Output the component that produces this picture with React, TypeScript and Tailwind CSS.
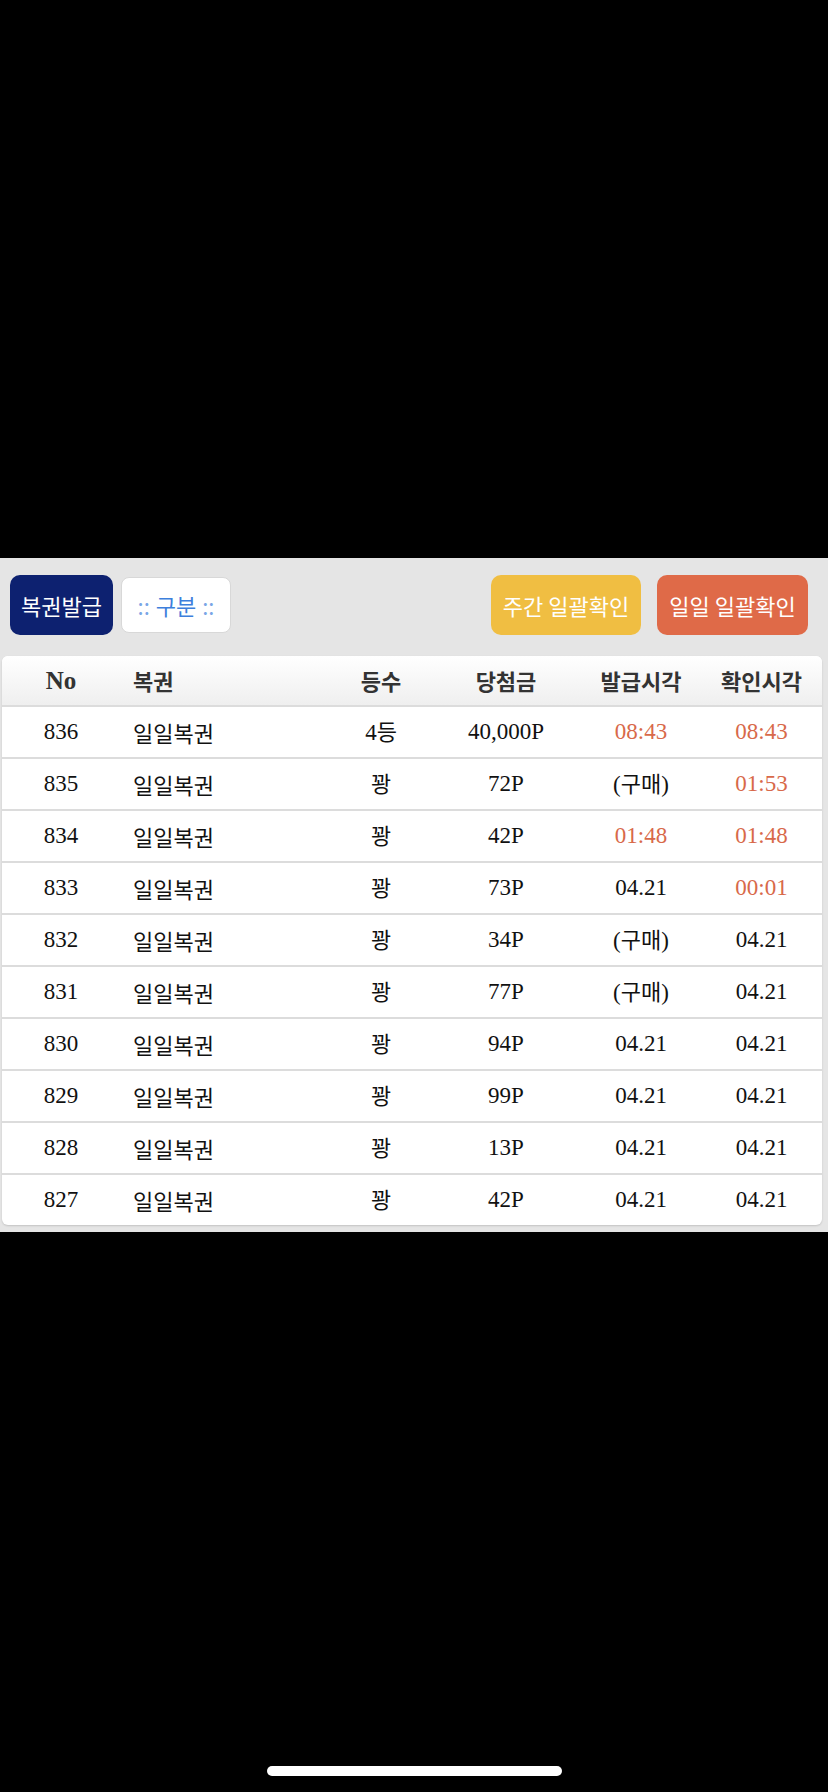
import React from "react";

type Row = {
  no: string;
  grade: string;
  prize: string;
  issued: string;
  issuedRed?: boolean;
  checked: string;
  checkedRed?: boolean;
};

const rows: Row[] = [
  { no: "836", grade: "4등", prize: "40,000P", issued: "08:43", issuedRed: true, checked: "08:43", checkedRed: true },
  { no: "835", grade: "꽝", prize: "72P", issued: "(구매)", checked: "01:53", checkedRed: true },
  { no: "834", grade: "꽝", prize: "42P", issued: "01:48", issuedRed: true, checked: "01:48", checkedRed: true },
  { no: "833", grade: "꽝", prize: "73P", issued: "04.21", checked: "00:01", checkedRed: true },
  { no: "832", grade: "꽝", prize: "34P", issued: "(구매)", checked: "04.21" },
  { no: "831", grade: "꽝", prize: "77P", issued: "(구매)", checked: "04.21" },
  { no: "830", grade: "꽝", prize: "94P", issued: "04.21", checked: "04.21" },
  { no: "829", grade: "꽝", prize: "99P", issued: "04.21", checked: "04.21" },
  { no: "828", grade: "꽝", prize: "13P", issued: "04.21", checked: "04.21" },
  { no: "827", grade: "꽝", prize: "42P", issued: "04.21", checked: "04.21" },
];

function Mixed({ text }: { text: string }) {
  const parts: { s: string; ko: boolean }[] = [];
  for (const ch of text) {
    const ko = /[\uac00-\ud7a3]/.test(ch);
    const last = parts[parts.length - 1];
    if (last && last.ko === ko) last.s += ch;
    else parts.push({ s: ch, ko });
  }
  return (
    <>
      {parts.map((p, i) =>
        p.ko ? (
          <span key={i} className="font-['Noto_Sans_CJK_KR',sans-serif] text-[22px]">
            {p.s}
          </span>
        ) : (
          <span key={i}>{p.s}</span>
        )
      )}
    </>
  );
}

const grid = "grid grid-cols-[118px_211px_100px_150px_120px_1fr] items-center";
const ko = "font-['Noto_Sans_CJK_KR',sans-serif] text-[22px]";

export default function App() {
  return (
    <div className="w-[828px] h-[1792px] bg-black flex flex-col">
      <div className="h-[558px] shrink-0" />
      <div className="bg-[#e5e5e5] pl-[2px] pr-[6px] pt-[17px] pb-[7px] shrink-0">
        <div className="flex items-center pl-[8px] pr-[14px] font-['Noto_Sans_CJK_KR',sans-serif] text-[22px]">
          <div className="w-[103px] h-[60px] rounded-[10px] bg-[#0d2170] text-white flex items-center justify-center">
            복권발급
          </div>
          <div className="ml-[8px] w-[110px] h-[56px] rounded-[8px] bg-white border border-[#d8d8d8] text-[#3d7fdc] flex items-center justify-center">
            <span className="text-[#7aa6e6]">::</span>
            <span className="mx-[6px]">구분</span>
            <span className="text-[#7aa6e6]">::</span>
          </div>
          <div className="flex-1" />
          <div className="w-[150px] h-[60px] rounded-[10px] bg-[#f0be42] text-white flex items-center justify-center whitespace-nowrap">
            주간 일괄확인
          </div>
          <div className="ml-[16px] w-[151px] h-[60px] rounded-[10px] bg-[#df6a48] text-white flex items-center justify-center whitespace-nowrap">
            일일 일괄확인
          </div>
        </div>

        <div className="mt-[21px] bg-white rounded-[6px] shadow-[0_1px_2px_rgba(0,0,0,0.15)] overflow-hidden font-['Liberation_Serif','Noto_Sans_CJK_KR',serif] text-[23px] text-[#111]">
          <div className={`${grid} h-[51px] bg-gradient-to-b from-white to-[#efefef] border-b-2 border-[#dcdcdc] text-[#333] font-bold`}>
            <div className="text-center text-[25px]">No</div>
            <div className={`pl-[13px] ${ko}`}>복권</div>
            <div className={`text-center ${ko}`}>등수</div>
            <div className={`text-center ${ko}`}>당첨금</div>
            <div className={`text-center ${ko}`}>발급시각</div>
            <div className={`text-center ${ko}`}>확인시각</div>
          </div>
          {rows.map((r, i) => (
            <div
              key={r.no}
              className={`${grid} h-[50px] ${i < rows.length - 1 ? "box-content border-b-2 border-[#dcdcdc]" : ""}`}
            >
              <div className="text-center">{r.no}</div>
              <div className={`pl-[13px] ${ko}`}>일일복권</div>
              <div className="text-center">
                <Mixed text={r.grade} />
              </div>
              <div className="text-center">{r.prize}</div>
              <div className={`text-center ${r.issuedRed ? "text-[#d8694a]" : ""}`}>
                <Mixed text={r.issued} />
              </div>
              <div className={`text-center ${r.checkedRed ? "text-[#d8694a]" : ""}`}>{r.checked}</div>
            </div>
          ))}
        </div>
      </div>
      <div className="flex-1 flex items-end justify-center pb-[16px]">
        <div className="w-[295px] h-[10px] rounded-full bg-white" />
      </div>
    </div>
  );
}
